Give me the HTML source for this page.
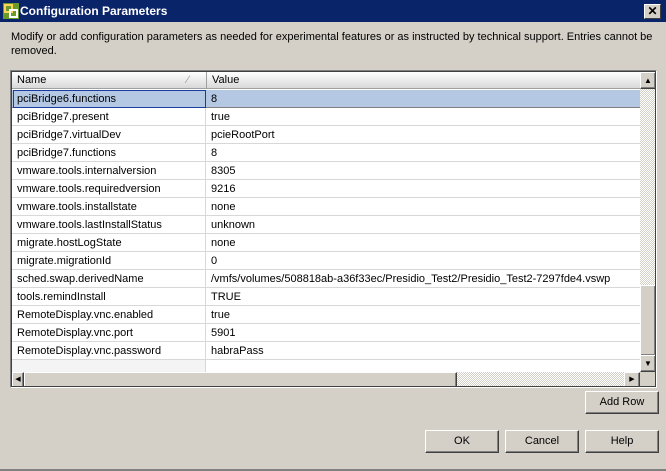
<!DOCTYPE html>
<html><head><style>
*{margin:0;padding:0;box-sizing:border-box}
body{width:666px;height:471px;background:#d4d0c8;font-family:Tahoma,"Liberation Sans",sans-serif;font-size:11px;color:#000;position:relative;overflow:hidden}
.abs{position:absolute}
#title{left:0;top:0;width:666px;height:22px;background:#0a246a;color:#fff;font-weight:bold;font-size:12px;line-height:22px;padding-left:20px}
#close{left:644px;top:4px;width:17px;height:15px;background:#d4d0c8;border:1px solid;border-color:#fff #404040 #404040 #fff;color:#000;font-size:12px;line-height:12px;text-align:center;font-weight:bold}
#desc{left:11px;top:30px;width:645px;line-height:14px}
#frame{left:10px;top:70px;width:647px;height:318px;border:1px solid;border-color:#808080 #fff #fff #808080;background:#fff}
#inner{left:0;top:0;width:645px;height:316px;border:1px solid #404040;overflow:hidden;background:#fff}
.hdr{top:0;height:17px;background:linear-gradient(#fff,#e4e4e4 70%,#d8d8d8);border-bottom:1px solid #a0a0a0;line-height:17px;padding-left:5px}
.row{left:0;width:628px;height:18px;border-bottom:1px solid #d8d8d8;line-height:19px}
.row span{position:absolute;top:0;white-space:nowrap}
.n{left:5px}.v{left:199px}
.div{position:absolute;left:193px;top:0;width:1px;height:18px;background:#d8d8d8}
.btn{position:absolute;background:#d4d0c8;border:1px solid;border-color:#fff #404040 #404040 #fff;box-shadow:inset -1px -1px #808080;text-align:center;line-height:20px;height:23px;width:74px}
.sb{position:absolute;background:#d4d0c8;border:1px solid;border-color:#fff #404040 #404040 #fff;box-shadow:inset -1px -1px #808080}
.chk{position:absolute;background-color:#eee;background-image:repeating-conic-gradient(#d4d0c8 0 25%,#fff 0 50%);background-size:2px 2px}
</style></head><body>
<div id="title" class="abs">Configuration Parameters</div>
<svg class="abs" style="left:3px;top:3px" width="16" height="16"><rect x="0" y="0" width="16" height="16" fill="#6a9a2a"/><rect x="2" y="2" width="7" height="7" fill="none" stroke="#ffd25a" stroke-width="2"/><rect x="7" y="7" width="7" height="7" fill="none" stroke="#fff" stroke-width="2"/></svg>
<div id="close" class="abs">✕</div>
<div id="desc" class="abs">Modify or add configuration parameters as needed for experimental features or as instructed by technical support. Entries cannot be removed.</div>
<div id="frame" class="abs"><div id="inner" class="abs">
<div class="abs hdr" style="left:0;width:195px;border-right:1px solid #a0a0a0">Name<span class="abs" style="left:175px;top:0;color:#999">⁄</span></div>
<div class="abs hdr" style="left:195px;width:433px">Value</div>
<div class="abs" style="left:0;top:18px;width:628px;height:18px;background:#b4c8e4;border-bottom:1px solid #808080"></div>
<div class="abs" style="left:1px;top:18px;width:193px;height:18px;border:1px solid #1a3ca0"></div>
<div class="abs" style="left:0;top:18px;width:628px">
<div class="row abs" style="top:0;border:none"><span class="n">pciBridge6.functions</span><span class="v">8</span></div>
<div class="row abs" style="top:18px"><div class="div"></div><span class="n">pciBridge7.present</span><span class="v">true</span></div>
<div class="row abs" style="top:36px"><div class="div"></div><span class="n">pciBridge7.virtualDev</span><span class="v">pcieRootPort</span></div>
<div class="row abs" style="top:54px"><div class="div"></div><span class="n">pciBridge7.functions</span><span class="v">8</span></div>
<div class="row abs" style="top:72px"><div class="div"></div><span class="n">vmware.tools.internalversion</span><span class="v">8305</span></div>
<div class="row abs" style="top:90px"><div class="div"></div><span class="n">vmware.tools.requiredversion</span><span class="v">9216</span></div>
<div class="row abs" style="top:108px"><div class="div"></div><span class="n">vmware.tools.installstate</span><span class="v">none</span></div>
<div class="row abs" style="top:126px"><div class="div"></div><span class="n">vmware.tools.lastInstallStatus</span><span class="v">unknown</span></div>
<div class="row abs" style="top:144px"><div class="div"></div><span class="n">migrate.hostLogState</span><span class="v">none</span></div>
<div class="row abs" style="top:162px"><div class="div"></div><span class="n">migrate.migrationId</span><span class="v">0</span></div>
<div class="row abs" style="top:180px"><div class="div"></div><span class="n">sched.swap.derivedName</span><span class="v">/vmfs/volumes/508818ab-a36f33ec/Presidio_Test2/Presidio_Test2-7297fde4.vswp</span></div>
<div class="row abs" style="top:198px"><div class="div"></div><span class="n">tools.remindInstall</span><span class="v">TRUE</span></div>
<div class="row abs" style="top:216px"><div class="div"></div><span class="n">RemoteDisplay.vnc.enabled</span><span class="v">true</span></div>
<div class="row abs" style="top:234px"><div class="div"></div><span class="n">RemoteDisplay.vnc.port</span><span class="v">5901</span></div>
<div class="row abs" style="top:252px"><div class="div"></div><span class="n">RemoteDisplay.vnc.password</span><span class="v">habraPass</span></div>
<div class="abs" style="top:270px;left:0;width:194px;height:12px;background:#f4f4f4;border-right:1px solid #d8d8d8"></div>
</div>
<div class="chk" style="left:628px;top:0;width:17px;height:300px"></div>
<div class="sb" style="left:628px;top:0;width:16px;height:17px;text-align:center;font-size:8px;line-height:15px">▲</div>
<div class="sb" style="left:628px;top:213px;width:16px;height:71px"></div>
<div class="sb" style="left:628px;top:283px;width:16px;height:17px;text-align:center;font-size:8px;line-height:15px">▼</div>
<div class="abs" style="left:0;top:300px;width:645px;height:16px;background:#d4d0c8"></div>
<div class="chk" style="left:0;top:300px;width:628px;height:16px"></div>
<div class="sb" style="left:0;top:300px;width:12px;height:16px;font-size:7px;line-height:14px;text-align:center">◀</div>
<div class="sb" style="left:12px;top:300px;width:433px;height:16px"></div>
<div class="sb" style="left:612px;top:300px;width:16px;height:16px;font-size:7px;line-height:14px;text-align:center">▶</div>
</div></div>
<div class="btn" style="left:585px;top:391px">Add Row</div>
<div class="btn" style="left:425px;top:430px">OK</div>
<div class="btn" style="left:505px;top:430px">Cancel</div>
<div class="btn" style="left:585px;top:430px">Help</div>
<div class="abs" style="left:0;top:469px;width:666px;height:2px;background:#808080"></div>
</body></html>
